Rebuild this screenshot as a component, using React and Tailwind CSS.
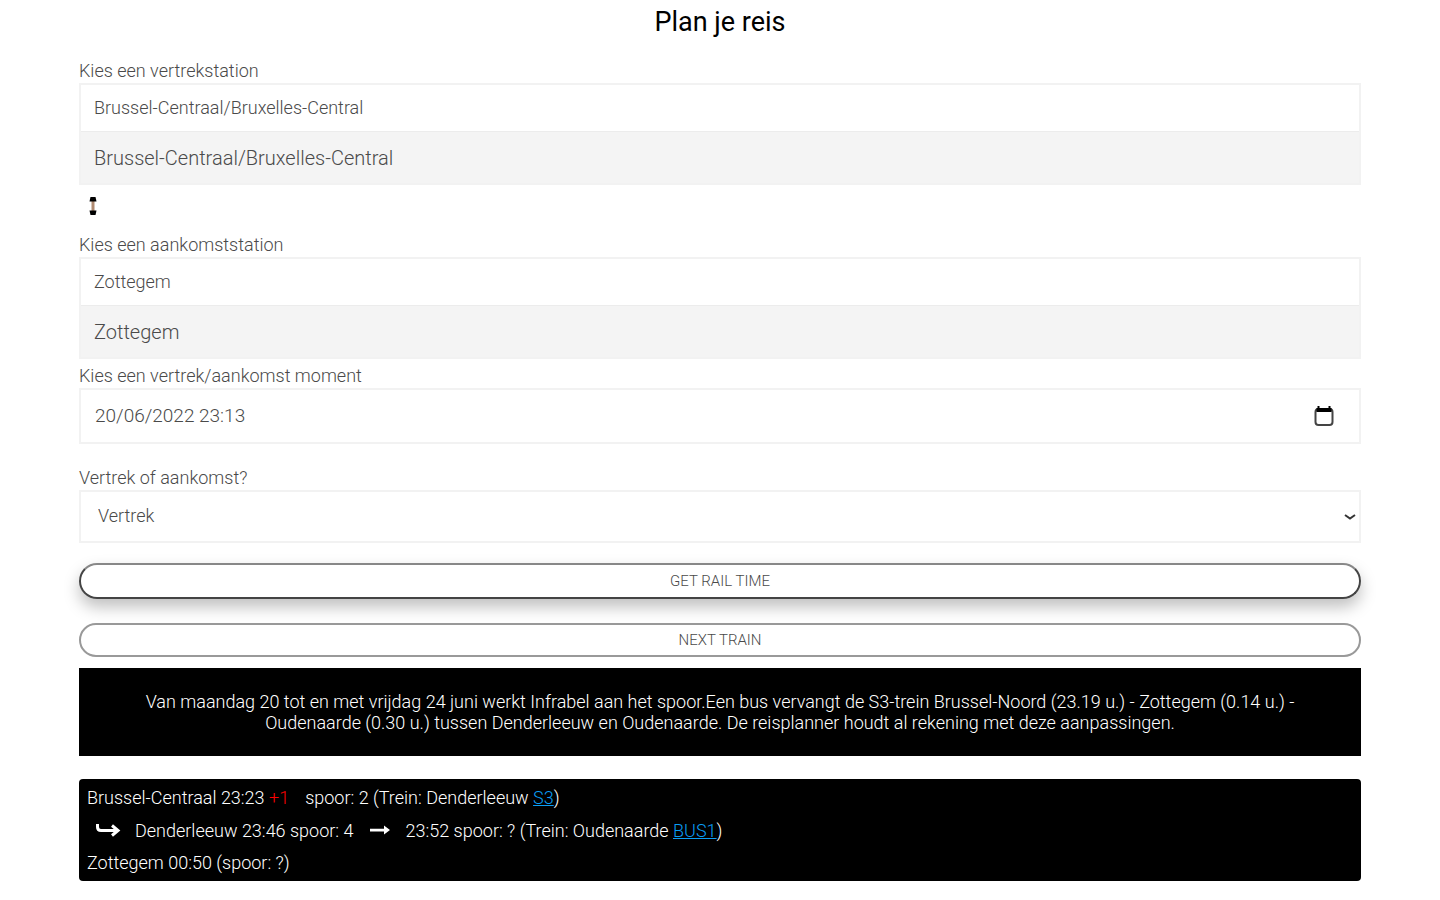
import React, { useState } from 'react';

const StationField = ({ id, label, value, onChange, options }) => {
  return (
    <div>
      <label htmlFor={id} className="block text-[18px] leading-6">{label}</label>
      <div className="border-2 border-[#f2f2f2]">
        <input
          id={id}
          type="text"
          value={value}
          onChange={(e) => onChange(e.target.value)}
          className="block w-full h-[46px] px-[13px] pb-0.5 text-[18px] outline-none"
        />
        <ul className="bg-[#f4f4f4] border-t border-[#ececec]">
          {options.map((option) => (
            <li key={option}>
              <button
                type="button"
                onClick={() => onChange(option)}
                className="block w-full h-[51px] px-[13px] text-left text-[20px]"
              >
                {option}
              </button>
            </li>
          ))}
        </ul>
      </div>
    </div>
  );
};

const SwapIcon = () => (
  <svg width="12" height="20" viewBox="0 0 12 20" fill="#000">
    <rect x="4.5" y="4" width="3" height="12" fill="#b08a70" />
    <path d="M2.5 5.5 L3.5 1 H8.5 L9.5 5.5 Z" />
    <path d="M2.5 14.5 L3.5 19 H8.5 L9.5 14.5 Z" />
  </svg>
);

const CalendarIcon = () => (
  <svg width="20" height="20" viewBox="0 0 20 20" fill="none" stroke="#444" strokeWidth="2">
    <rect x="1.5" y="3" width="17" height="16" rx="3" />
    <path d="M2.5 4 H17.5" stroke="#000" strokeWidth="4" />
    <path d="M4.5 0 V4 M15.5 0 V4" stroke="#000" />
  </svg>
);

const ChevronIcon = () => (
  <svg width="12" height="8" viewBox="0 0 12 8" fill="none" stroke="#333" strokeWidth="2">
    <path d="M1 2 L6 5.5 L11 2" />
  </svg>
);

const TransferIcon = () => (
  <svg width="26" height="16" viewBox="0 0 26 16" fill="none" stroke="#fff" strokeWidth="3">
    <path d="M2.5 2 V5 Q2.5 8.5 6 8.5 H21" />
    <path d="M17 3.5 L23 8.5 L17 13.5" />
  </svg>
);

const ArrowIcon = () => (
  <svg width="20" height="12" viewBox="0 0 20 12" fill="#fff">
    <path d="M0 4.8 H14 V1.5 L20 6 L14 10.5 V7.6 H0 Z" />
  </svg>
);

const TrainLink = ({ children }) => (
  <a href="#" className="text-[#0a9ef5] underline">{children}</a>
);

const App = () => {
  const [from, setFrom] = useState('Brussel-Centraal/Bruxelles-Central');
  const [to, setTo] = useState('Zottegem');
  const [moment, setMoment] = useState('20/06/2022 23:13');
  const [mode, setMode] = useState('Vertrek');

  const swapStations = () => {
    setFrom(to);
    setTo(from);
  };

  return (
    <main className="min-h-screen bg-white px-[79px] pt-1 font-['Roboto',sans-serif] font-light text-[#4a4a4a]">
      <h1 className="text-center text-[27px] leading-9 font-normal text-black">Plan je reis</h1>

      <form className="pt-[19px]" onSubmit={(e) => e.preventDefault()}>
        <StationField
          id="from"
          label="Kies een vertrekstation"
          value={from}
          onChange={setFrom}
          options={['Brussel-Centraal/Bruxelles-Central']}
        />

        <button type="button" aria-label="Wissel stations" onClick={swapStations} className="block ml-2 mt-[11px] mb-[17px]">
          <SwapIcon />
        </button>

        <StationField id="to" label="Kies een aankomststation" value={to} onChange={setTo} options={['Zottegem']} />

        <label htmlFor="moment" className="block mt-[5px] text-[18px] leading-6">Kies een vertrek/aankomst moment</label>
        <div className="flex items-center h-14 pl-3.5 pr-[25px] border-2 border-[#f2f2f2]">
          <input
            id="moment"
            type="text"
            value={moment}
            onChange={(e) => setMoment(e.target.value)}
            className="flex-1 text-[19px] outline-none"
          />
          <button type="button" aria-label="Kies een datum">
            <CalendarIcon />
          </button>
        </div>

        <label htmlFor="mode" className="block mt-[22px] text-[18px] leading-6">Vertrek of aankomst?</label>
        <div className="relative">
          <select
            id="mode"
            value={mode}
            onChange={(e) => setMode(e.target.value)}
            className="block w-full h-[53px] px-[17px] pb-0.5 appearance-none border-2 border-[#f2f2f2] text-[18px] outline-none"
          >
            <option>Vertrek</option>
            <option>Aankomst</option>
          </select>
          <span className="absolute right-[5px] inset-y-0 flex items-center pointer-events-none">
            <ChevronIcon />
          </span>
        </div>

        <button
          type="submit"
          className="block w-full h-9 mt-5 rounded-full border-2 border-[#444] border-t-[#888] text-[15px] shadow-[0_8px_16px_rgba(0,0,0,0.25)]"
        >
          GET RAIL TIME
        </button>
        <button type="button" className="block w-full h-[34px] mt-6 rounded-full border-2 border-[#999] text-[15px]">
          NEXT TRAIN
        </button>
      </form>

      <p className="mt-[11px] px-14 pt-[23px] pb-[23px] bg-black text-center text-[18px] leading-[21px] text-white">
        Van maandag 20 tot en met vrijdag 24 juni werkt Infrabel aan het spoor.Een bus vervangt de S3-trein Brussel-Noord (23.19 u.) - Zottegem (0.14 u.) - Oudenaarde (0.30 u.) tussen Denderleeuw en Oudenaarde. De reisplanner houdt al rekening met deze aanpassingen.
      </p>

      <section className="mt-[23px] px-2 py-[3px] rounded bg-black text-[18px] leading-[31px] text-white">
        <p>
          Brussel-Centraal 23:23 <span className="text-[#f00]">+1</span>
          <span className="ml-4">spoor: 2 (Trein: Denderleeuw <TrainLink>S3</TrainLink>)</span>
        </p>
        <p className="flex items-center h-[34px] pl-2">
          <TransferIcon />
          <span className="ml-3.5">Denderleeuw 23:46 spoor: 4</span>
          <span className="mx-4"><ArrowIcon /></span>
          <span>23:52 spoor: ? (Trein: Oudenaarde <TrainLink>BUS1</TrainLink>)</span>
        </p>
        <p>Zottegem 00:50 (spoor: ?)</p>
      </section>
    </main>
  );
};

export default App;
